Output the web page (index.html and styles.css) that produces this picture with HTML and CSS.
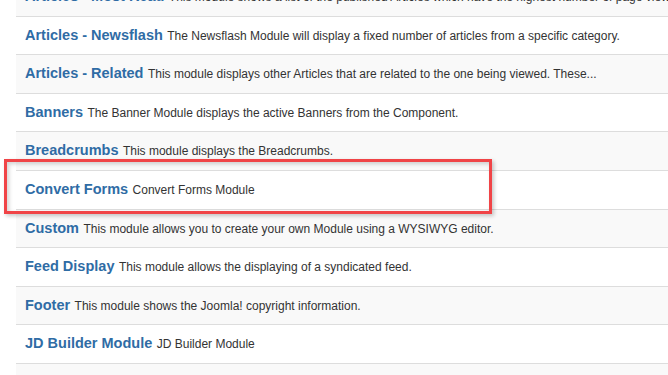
FILE: index.html
```html
<!DOCTYPE html>
<html>
<head>
<meta charset="utf-8">
<link rel="stylesheet" href="styles.css">
</head>
<body>
<div class="page">
  <ul class="modules">
    <li class="row odd"><a class="title">Articles - Most Read</a> <span class="desc">This module shows a list of the published Articles which have the highest number of page views.</span></li>
    <li class="row"><a class="title">Articles - Newsflash</a> <span class="desc">The Newsflash Module will display a fixed number of articles from a specific category.</span></li>
    <li class="row odd"><a class="title">Articles - Related</a> <span class="desc">This module displays other Articles that are related to the one being viewed. These...</span></li>
    <li class="row"><a class="title">Banners</a> <span class="desc">The Banner Module displays the active Banners from the Component.</span></li>
    <li class="row odd"><a class="title">Breadcrumbs</a> <span class="desc">This module displays the Breadcrumbs.</span></li>
    <li class="row"><a class="title">Convert Forms</a> <span class="desc">Convert Forms Module</span></li>
    <li class="row odd"><a class="title">Custom</a> <span class="desc">This module allows you to create your own Module using a WYSIWYG editor.</span></li>
    <li class="row"><a class="title">Feed Display</a> <span class="desc">This module allows the displaying of a syndicated feed.</span></li>
    <li class="row odd"><a class="title">Footer</a> <span class="desc">This module shows the Joomla! copyright information.</span></li>
    <li class="row"><a class="title">JD Builder Module</a> <span class="desc">JD Builder Module</span></li>
    <li class="row odd"></li>
  </ul>
  <div class="highlight"></div>
</div>
</body>
</html>
```

FILE: styles.css
```css
html, body {
  margin: 0;
  padding: 0;
  background: #fff;
  overflow: hidden;
}
body {
  width: 668px;
  height: 375px;
  font-family: "Liberation Sans", Arial, sans-serif;
}
.page {
  position: relative;
  height: 375px;
  overflow: hidden;
}
.modules {
  list-style: none;
  margin: -22px 0 0 16px;
  padding: 0;
  width: 700px;
}
.row {
  display: block;
  box-sizing: border-box;
  height: 38.6px;
  padding: 0 9px;
  line-height: 35.5px;
  border-bottom: 1px solid #dddddd;
  background: #ffffff;
  white-space: nowrap;
  overflow: hidden;
  color: #333333;
}
.row.odd {
  background: #f9f9f9;
}
.title {
  font-size: 14.5px;
  font-weight: bold;
  color: #2f6ca5;
  text-decoration: none;
}
.desc {
  font-size: 12px;
  color: #333333;
}
.highlight {
  position: absolute;
  left: 4px;
  top: 159px;
  width: 482px;
  height: 49px;
  border: 3px solid #f04447;
  box-shadow: 2px 2px 4px rgba(0, 0, 0, 0.22), inset 2px 2px 4px rgba(0, 0, 0, 0.18);
}
```
